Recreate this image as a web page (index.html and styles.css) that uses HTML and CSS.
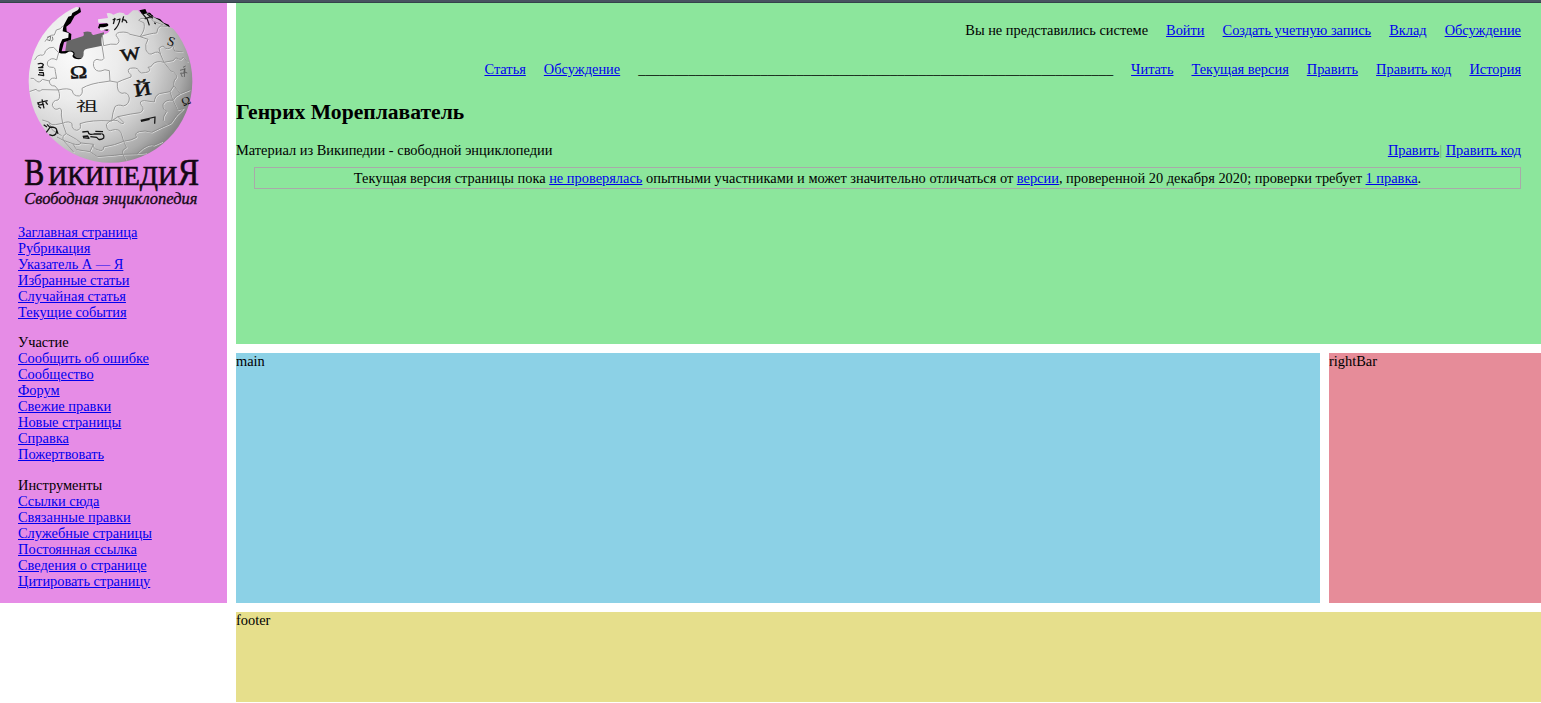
FILE: index.html
```html
<!DOCTYPE html>
<html lang="ru">
<head>
<meta charset="utf-8">
<title>Генрих Мореплаватель</title>
<link rel="stylesheet" href="styles.css">
</head>
<body>
<div class="topline"></div>
<div class="page">
  <aside class="sidebar">
    <svg class="logo" viewBox="0 9 681 630" role="img" aria-label="Википедия">
      <defs>
        <radialGradient id="ball" gradientUnits="userSpaceOnUse" cx="225" cy="170" r="370">
          <stop offset="0" stop-color="#fafafa"/>
          <stop offset=".35" stop-color="#ececec"/>
          <stop offset=".65" stop-color="#d2d2d2"/>
          <stop offset=".88" stop-color="#aaa"/>
          <stop offset="1" stop-color="#858585"/>
        </radialGradient>
        <clipPath id="round"><circle cx="331.5" cy="243" r="245.5"/></clipPath>
      </defs>
      <path fill="#666" d="M200 124L248 109Q254 106 250 97Q262 92 274 97Q274 106 281 105L312 97V150L240 180L195 160Z"/>
      <path fill="#000" d="M225 27L240 22L243 36L224 48L212 70L199 80L200 94L214 102L213 119L192 127L185 154L215 152Q228 157 222 167Q232 178 245 174L249 181L225 181L213 166L175 162L182 118L190 60Z"/>
      <path fill="#000" d="M298 72L323 70L330 82L322 93L303 88L294 84ZM418 31L436 27L441 38L450 38L462 52L480 57L491 68L506 74L510 82L490 78L440 60Z"/>
      <g clip-path="url(#round)">
      <path fill="url(#ball)" d="M238 23L234 30L217 39L214 47L205 50L190 78L188 94L206 99L205 113L187 118L178 137L176 158Q192 163 201 158Q210 151 219 158Q222 162 217 168Q221 178 237 178Q251 177 251 160Q249 149 262 146L306 137Q302 118 307 105Q328 100 329 90Q322 84 304 92Q297 90 300 82Q323 82 326 74L321 69L295 68L294 58L324 54L320 40Q331 36 340 44L352 39Q359 36 372 40Q374 48 384 44L399 31L414 31Q416 38 429 43L443 40L455 48L478 61L503 79L600 120V520H60V60L200 10Z"/>
      <g class="seam-light" transform="translate(2 2)">
        <use href="#seams"/>
      </g>
      <g id="seams" class="seam">
        <path d="M176 158L170 180Q154 170 143 185Q138 202 156 202Q166 200 166 214L170 236Q155 230 148 243Q149 259 165 258L175 270Q205 262 217 272Q219 289 238 288Q250 283 246 265Q270 250 318 245L330 243L328 212Q314 206 303 213Q286 216 281 199Q278 180 291 178Q308 184 312 175L306 137"/>
        <path d="M104 180Q112 164 121 165Q134 169 136 153Q146 140 161 142L176 158M135 125Q147 103 163 105L169 90Q184 88 188 78M92 235Q103 232 109 243Q119 251 127 238L148 243M88 275L108 268Q117 278 126 269L175 270Q183 292 174 300Q158 301 157 316Q163 334 178 325Q187 325 184 345L188 370Q207 361 216 371Q215 389 230 391Q246 389 240 371Q273 359 335 363Q338 335 345 320Q354 312 370 318Q388 314 388 294Q384 274 366 280Q350 278 352 247L330 243"/>
        <path d="M307 105L311 137Q334 130 350 133Q363 126 352 112Q342 101 359 97Q382 94 390 103L420 110Q437 90 432 69L416 61Q420 53 435 55Q456 51 460 64L490 75M420 110Q452 100 470 99Q472 83 481 78L503 79M420 110L444 118Q434 133 438 150Q447 168 459 160Q476 151 482 164L492 187Q468 181 458 193Q454 203 444 202Q458 214 436 218Q422 222 417 214Q415 203 399 204Q381 204 386 217Q397 225 393 231Q364 241 352 247M482 164L477 145Q491 132 496 145Q512 149 518 136L524 153L548 156M492 187L520 182Q527 169 535 177Q545 183 550 171L563 186M492 187L513 213Q529 218 531 232Q519 241 522 257L541 281Q525 289 519 301"/>
        <path d="M335 363L354 350Q394 341 421 338Q436 328 424 316Q415 302 434 302L463 306Q464 288 478 281L510 275L522 257M354 350L372 368Q368 376 352 362Q330 356 319 374Q322 399 338 390Q358 385 364 400L371 424Q396 421 410 412Q402 399 418 395Q434 390 455 397L486 382L513 370Q526 346 551 326M510 275L519 301Q495 298 489 314Q488 330 500 334Q488 350 490 362L502 374M541 281L569 270M519 301L533 330L551 326"/>
        <path d="M127 360L146 366Q156 378 166 374L188 370L199 401Q185 407 190 421L218 431Q237 438 243 429L280 433Q277 445 295 450Q311 456 311 441L343 434L371 424L380 443Q364 449 369 463L410 462L428 446Q450 431 462 436L487 425M199 401L229 418L243 429M146 366L158 391L185 407M171 411L190 421L221 456M280 433L270 455L292 470L343 466L369 463L380 484M218 431L230 449L270 455M410 462L438 459"/>
      </g>
      </g>
      <g class="mark">
        <text class="heavy" x="210" y="235" font-size="55" textLength="52" lengthAdjust="spacingAndGlyphs" transform="rotate(-3 235 220)">Ω</text>
        <text class="heavy" x="361" y="180" font-size="52" textLength="60" lengthAdjust="spacingAndGlyphs" transform="rotate(-9 390 160)">W</text>
        <text class="heavy" x="402" y="287" font-size="56" textLength="52" lengthAdjust="spacingAndGlyphs" transform="rotate(-9 425 270)">Й</text>
        <text class="cjk" x="228" y="333" font-size="36" textLength="66" lengthAdjust="spacingAndGlyphs">祖</text>
        <text x="502" y="137" font-size="40" transform="rotate(20 513 125)">S</text>
        <text x="543" y="316" font-size="36" transform="rotate(-24 555 300)">Ω</text>
      </g>
      <g class="stroke">
        <path d="M422 361L465 351L464 371M423 364L449 358"/>
        <path d="M338 59L347 57M345 54L340 72M350 60L360 57Q357 77 343 90M371 49L366 67M366 58L377 61L381 69M425 38L442 58L448 76M434 57L459 47M441 42L459 55M463 68L467 72"/>
        <path d="M113 192Q126 188 130 194Q129 203 116 203H130M116 210L130 211M117 218H130L131 227L114 224"/>
        <path d="M111 309L143 302M126 298L132 325M119 307Q110 314 119 315Q128 312 132 315M115 319L123 325M137 306L143 314"/>
        <path d="M131 374L141 381M141 373L150 382L139 397M151 381Q169 381 170 390Q171 405 157 407L148 404M170 390L174 401"/>
        <path d="M247 396L264 394Q266 407 282 402H303M248 409L263 408L267 415L249 413M271 410L290 412L296 418Q304 420 311 414Q314 403 304 401M286 394L309 395"/>
        <path class="thin" d="M141 112L152 109L150 122L141 119M157 110L159 119L153 124M540 211L554 207L551 220L542 219L547 231M555 204L553 231M554 216L562 219M549 202L557 198"/>
      </g>
      <text class="wordmark cap" x="73" y="556" textLength="60" lengthAdjust="spacingAndGlyphs">В</text>
      <text class="wordmark small" x="144" y="556" textLength="388" lengthAdjust="spacingAndGlyphs">ИКИПЕДИ</text>
      <text class="wordmark cap" x="533" y="556" textLength="64" lengthAdjust="spacingAndGlyphs">Я</text>
      <text class="tagline" x="73" y="611" textLength="519" lengthAdjust="spacingAndGlyphs">Свободная энциклопедия</text>
    </svg>
    <nav class="menus">
      <ul class="menu">
        <li><a href="#">Заглавная страница</a></li>
        <li><a href="#">Рубрикация</a></li>
        <li><a href="#">Указатель А — Я</a></li>
        <li><a href="#">Избранные статьи</a></li>
        <li><a href="#">Случайная статья</a></li>
        <li><a href="#">Текущие события</a></li>
      </ul>
      <ul class="menu">
        <li>Участие</li>
        <li><a href="#">Сообщить об ошибке</a></li>
        <li><a href="#">Сообщество</a></li>
        <li><a href="#">Форум</a></li>
        <li><a href="#">Свежие правки</a></li>
        <li><a href="#">Новые страницы</a></li>
        <li><a href="#">Справка</a></li>
        <li><a href="#">Пожертвовать</a></li>
      </ul>
      <ul class="menu">
        <li>Инструменты</li>
        <li><a href="#">Ссылки сюда</a></li>
        <li><a href="#">Связанные правки</a></li>
        <li><a href="#">Служебные страницы</a></li>
        <li><a href="#">Постоянная ссылка</a></li>
        <li><a href="#">Сведения о странице</a></li>
        <li><a href="#">Цитировать страницу</a></li>
      </ul>
    </nav>
  </aside>
  <header class="header">
    <nav class="row">
      <span>Вы не представились системе</span>
      <a href="#">Войти</a>
      <a href="#">Создать учетную запись</a>
      <a href="#">Вклад</a>
      <a href="#">Обсуждение</a>
    </nav>
    <nav class="row tabs">
      <a href="#">Статья</a>
      <a href="#">Обсуждение</a>
      <span>__________________________________________________________________</span>
      <a href="#">Читать</a>
      <a href="#">Текущая версия</a>
      <a href="#">Править</a>
      <a href="#">Править код</a>
      <a href="#">История</a>
    </nav>
    <h1 class="title">Генрих Мореплаватель</h1>
    <div class="subtitle">
      <span>Материал из Википедии - свободной энциклопедии</span>
      <span><a href="#">Править</a><span class="bar">|</span> <a href="#">Править код</a></span>
    </div>
    <div class="notice">Текущая версия страницы пока <a href="#">не проверялась</a> опытными участниками и может значительно отличаться от <a href="#">версии</a>, проверенной 20 декабря 2020; проверки требует <a href="#">1 правка</a>.</div>
  </header>
  <main class="main">main</main>
  <aside class="right">rightBar</aside>
  <footer class="footer">footer</footer>
</div>
</body>
</html>
```
FILE: styles.css
```css
* { box-sizing: border-box; }
body {
  margin: 0;
  background: #fff;
  color: #000;
  font: 14.4px/16px "Liberation Serif", "Times New Roman", serif;
}
a { color: #0000ee; text-decoration: underline; }
.topline { height: 3px; background: #485360; border-bottom: 1px solid #34444a; }
.page {
  display: grid;
  grid-template-columns: 227px 1fr 212px;
  grid-template-rows: 341px 250px 90px;
  gap: 9px;
}
.sidebar { grid-row: 1 / 3; background: #e68ce6; }
.logo { display: block; width: 227px; height: 210px; }
.menus { display: flex; flex-direction: column; gap: 14.4px; padding: 11px 18px 0; }
.menu { margin: 0; padding: 0; list-style: none; }
.header { grid-column: 2 / 4; background: #8ce69c; padding: 19px 20px 0 0; }
.row { display: flex; justify-content: flex-end; gap: 18px; white-space: nowrap; }
.tabs { margin-top: 23px; }
.title { margin: 23px 0 18px; font-size: 21.6px; line-height: 24px; }
.subtitle { display: flex; justify-content: space-between; }
.bar { color: #70ad7b; }
.notice { margin: 9px 0 0 18px; padding: 2px; border: 1px solid #a9a9a9; text-align: center; }
.main { background: #8cd1e6; }
.right { background: #e68c99; }
.footer { grid-column: 2 / 4; background: #e6df8c; }

.seam { fill: none; stroke: #858585; stroke-width: 3; stroke-linejoin: round; opacity: .8; }
.seam-light { filter: brightness(2.2); opacity: .7; }
.mark { font-family: "Liberation Serif", serif; fill: #111; }
.heavy { stroke: #111; stroke-width: 1.6; }
.cjk { font-family: "Noto Sans CJK SC", sans-serif; }
.stroke { fill: none; stroke: #161616; stroke-width: 3.8; stroke-linejoin: round; }
.stroke .thin { stroke-width: 2; stroke: #444; }
.wordmark { font-family: "Liberation Serif", serif; fill: #140814; stroke: #140814; stroke-width: 2; }
.cap { font-size: 113px; }
.small { font-size: 84px; }
.tagline { font: italic 48px "Liberation Serif", serif; fill: #140814; stroke: #140814; stroke-width: 1; }
```
